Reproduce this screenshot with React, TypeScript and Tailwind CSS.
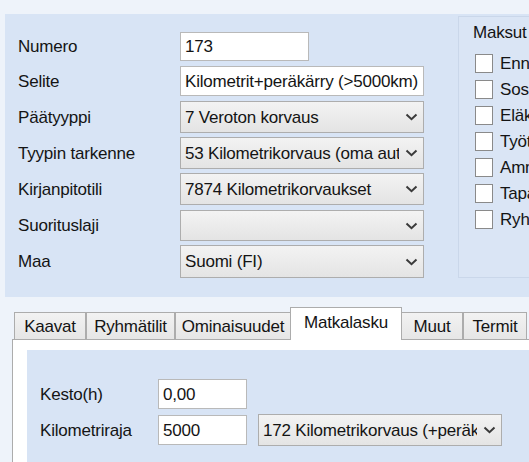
import React from "react";

const FONT = "font-['Liberation_Sans',Arial,sans-serif]";

function Chevron() {
  return (
    <svg width="13" height="8" viewBox="0 0 13 8" className="shrink-0">
      <path d="M1.5 1.5 L6.5 6.2 L11.5 1.5" fill="none" stroke="#3a3a3a" strokeWidth="2" />
    </svg>
  );
}

function TextBox({ value, w, h = 30 }: { value: string; w: number; h?: number }) {
  return (
    <div
      className="flex items-center bg-white border border-[#b9b9b9] pl-[4px] overflow-hidden whitespace-nowrap shrink-0"
      style={{ width: w, height: h }}
    >
      {value}
    </div>
  );
}

function Combo({ value, w, h = 32 }: { value: string; w: number; h?: number }) {
  return (
    <div
      className="flex items-center border border-[#adadad] bg-gradient-to-b from-[#f3f3f3] to-[#e4e4e4] pl-[4px] pr-[5px] shrink-0"
      style={{ width: w, height: h }}
    >
      <div className="flex-1 overflow-hidden whitespace-nowrap">{value}</div>
      <div className="ml-[6px]">
        <Chevron />
      </div>
    </div>
  );
}

function Row({ label, children, extra }: { label: string; children: React.ReactNode; extra?: string }) {
  return (
    <div className={`flex items-center ${extra ?? ""}`}>
      <div className="w-[162px] whitespace-nowrap">{label}</div>
      {children}
    </div>
  );
}

function Check({ label }: { label: string }) {
  return (
    <div className="flex items-center h-[26px] whitespace-nowrap">
      <div className="w-[18px] h-[19px] border border-[#8a8a8a] bg-white shrink-0" />
      <span className="ml-[7px]">{label}</span>
    </div>
  );
}

function Tab({ label, w, selected }: { label: string; w: number; selected?: boolean }) {
  if (selected) {
    return (
      <div
        className="relative z-10 h-[33px] -mx-px shrink-0 bg-white border border-b-0 border-[#acacac] flex items-start justify-center pt-[6px] whitespace-nowrap"
        style={{ width: w + 2 }}
      >
        {label}
      </div>
    );
  }
  return (
    <div
      className="h-[28px] shrink-0 bg-gradient-to-b from-[#f2f2f2] to-[#e6e6e6] border border-[#acacac] flex items-center justify-center whitespace-nowrap"
      style={{ width: w }}
    >
      {label}
    </div>
  );
}

export default function App() {
  return (
    <div
      className={`${FONT} w-[529px] h-[462px] overflow-hidden bg-[#eef3fa] text-[17px] tracking-[-0.2px] leading-none text-[#141414]`}
    >
      {/* top panel */}
      <div className="ml-[5px] mt-[14px] h-[283px] w-[524px] bg-[#d8e4f5] flex">
        <div className="pl-[13px] pt-[18px] flex flex-col gap-[4px] shrink-0">
          <Row label="Numero">
            <TextBox value="173" w={129} h={29} />
          </Row>
          <Row label="Selite" extra="mt-[1px]">
            <TextBox value="Kilometrit+peräkärry (>5000km)" w={244} h={30} />
          </Row>
          <Row label="Päätyyppi" extra="mt-[1px]">
            <Combo value="7 Veroton korvaus" w={244} />
          </Row>
          <Row label="Tyypin tarkenne">
            <Combo value="53 Kilometrikorvaus (oma auto)" w={244} />
          </Row>
          <Row label="Kirjanpitotili">
            <Combo value="7874 Kilometrikorvaukset" w={244} />
          </Row>
          <Row label="Suorituslaji" extra="mt-[1px]">
            <Combo value="" w={244} h={31} />
          </Row>
          <Row label="Maa">
            <Combo value="Suomi (FI)" w={244} h={33} />
          </Row>
        </div>
        <div className="ml-[34px] mt-[2px] h-[262px] flex-1 min-w-0 border-l border-t border-b border-[#cad7ea] bg-[#dae5f5] pl-[14px] overflow-hidden">
          <div className="mt-[5px] h-[20px] flex items-center whitespace-nowrap">Maksut</div>
          <div className="mt-[8px] ml-[2px] flex flex-col">
            <Check label="Ennakonpidätys" />
            <Check label="Sosiaaliturvamaksu" />
            <Check label="Eläkevakuutusmaksu" />
            <Check label="Työttömyysvakuutusmaksu" />
            <Check label="Ammattiliiton jäsenmaksu" />
            <Check label="Tapaturmavakuutus" />
            <Check label="Ryhmähenkivakuutus" />
          </div>
        </div>
      </div>

      {/* tab section */}
      <div className="ml-[12px] mt-[10px]">
        <div className="flex items-end pl-[2px] -mb-px">
          <Tab label="Kaavat" w={72} />
          <Tab label="Ryhmätilit" w={89} />
          <Tab label="Ominaisuudet" w={116} />
          <Tab label="Matkalasku" w={110} selected />
          <Tab label="Muut" w={62} />
          <Tab label="Termit" w={64} />
          <div className="w-[20px] shrink-0" />
        </div>
        <div className="border-l border-t border-[#acacac] bg-white pl-[14px] pt-[10px] h-[200px]">
          <div className="bg-[#d8e4f5] h-full pl-[13px] pt-[29px] flex flex-col gap-[5px]">
            <div className="flex items-center">
              <div className="w-[118px] whitespace-nowrap">Kesto(h)</div>
              <TextBox value="0,00" w={89} h={30} />
            </div>
            <div className="flex items-center">
              <div className="w-[118px] whitespace-nowrap">Kilometriraja</div>
              <TextBox value="5000" w={89} h={30} />
              <div className="ml-[11px]">
                <Combo value="172 Kilometrikorvaus (+peräkärry)" w={244} h={32} />
              </div>
            </div>
          </div>
        </div>
      </div>
    </div>
  );
}
